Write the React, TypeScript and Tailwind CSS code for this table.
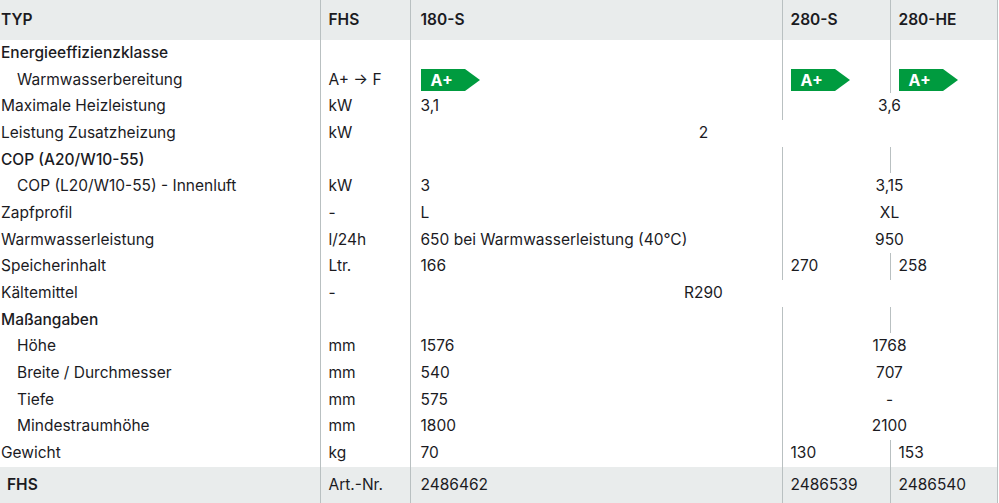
import React from "react";

type Cell = { text?: React.ReactNode; span?: number; label?: boolean };
type Row = { name: string; kind?: "section" | "sub"; unit?: string; cells: Cell[] };

const rows: Row[] = [
  { name: "Energieeffizienzklasse", kind: "section", cells: [{}, {}, {}] },
  { name: "Warmwasserbereitung", kind: "sub", unit: "A+ → F", cells: [{ label: true }, { label: true }, { label: true }] },
  { name: "Maximale Heizleistung", unit: "kW", cells: [{ text: "3,1" }, { text: "3,6", span: 2 }] },
  { name: "Leistung Zusatzheizung", unit: "kW", cells: [{ text: "2", span: 3 }] },
  { name: "COP (A20/W10-55)", kind: "section", cells: [{}, {}, {}] },
  { name: "COP (L20/W10-55) - Innenluft", kind: "sub", unit: "kW", cells: [{ text: "3" }, { text: "3,15", span: 2 }] },
  { name: "Zapfprofil", unit: "-", cells: [{ text: "L" }, { text: "XL", span: 2 }] },
  { name: "Warmwasserleistung", unit: "l/24h", cells: [{ text: "650 bei Warmwasserleistung (40°C)" }, { text: "950", span: 2 }] },
  { name: "Speicherinhalt", unit: "Ltr.", cells: [{ text: "166" }, { text: "270" }, { text: "258" }] },
  { name: "Kältemittel", unit: "-", cells: [{ text: "R290", span: 3 }] },
  { name: "Maßangaben", kind: "section", cells: [{}, {}, {}] },
  { name: "Höhe", kind: "sub", unit: "mm", cells: [{ text: "1576" }, { text: "1768", span: 2 }] },
  { name: "Breite / Durchmesser", kind: "sub", unit: "mm", cells: [{ text: "540" }, { text: "707", span: 2 }] },
  { name: "Tiefe", kind: "sub", unit: "mm", cells: [{ text: "575" }, { text: "-", span: 2 }] },
  { name: "Mindestraumhöhe", kind: "sub", unit: "mm", cells: [{ text: "1800" }, { text: "2100", span: 2 }] },
  { name: "Gewicht", unit: "kg", cells: [{ text: "70" }, { text: "130" }, { text: "153" }] },
];

function EnergyLabel() {
  return (
    <span className="relative inline-flex h-[22px] w-[59px] items-center align-middle">
      <svg className="absolute inset-0" width="59" height="22" viewBox="0 0 59 22">
        <polygon points="0,0 44,0 59,11 44,22 0,22" fill="#009b3f" />
      </svg>
      <span className="relative pl-[10px] text-[16px] font-bold leading-none text-white">A+</span>
    </span>
  );
}

const line = "border-l border-[#b9c0c1]";

export default function App() {
  return (
    <div className="w-[999px] h-[503px] overflow-hidden bg-white text-[15.5px] text-[#1b1b1f]" style={{ fontFamily: "Inter, 'Noto Sans', sans-serif" }}>
      <table className="w-[997px] table-fixed border-collapse">
        <colgroup>
          <col className="w-[320px]" />
          <col className="w-[90px]" />
          <col className="w-[372px]" />
          <col className="w-[108px]" />
          <col className="w-[107px]" />
        </colgroup>
        <thead>
          <tr className="h-[40px] bg-[#e9ecec]">
            <th className="pl-px text-left font-semibold">TYP</th>
            <th className={`${line} pl-2 text-left font-semibold`}>FHS</th>
            <th className={`${line} pl-[10px] text-left font-semibold`}>180-S</th>
            <th className={`${line} pl-2 text-left font-semibold`}>280-S</th>
            <th className={`${line} border-r pl-2 text-left font-semibold`}>280-HE</th>
          </tr>
        </thead>
        <tbody>
          {rows.map((r) => {
            let col = 2;
            return (
              <tr key={r.name} className="h-[26.65px] leading-[26.65px]">
                <td className={`${r.kind === "sub" ? "pl-[17px]" : "pl-px"} ${r.kind === "section" ? "font-medium" : ""} whitespace-nowrap`}>
                  {r.name}
                </td>
                <td className={`${line} pl-2 whitespace-nowrap`}>{r.unit}</td>
                {r.cells.map((c, i) => {
                  const span = c.span ?? 1;
                  const start = col;
                  col += span;
                  const last = col === 5;
                  const pad = start === 2 ? "pl-[10px]" : "pl-2";
                  return (
                    <td
                      key={i}
                      colSpan={span}
                      className={`${line} ${last ? "border-r" : ""} ${span > 1 ? "text-center" : `${pad} text-left`} whitespace-nowrap`}
                    >
                      {c.label ? <EnergyLabel /> : c.text}
                    </td>
                  );
                })}
              </tr>
            );
          })}
          <tr className="h-[37px] bg-[#e9ecec]">
            <td className="pl-[7px] font-semibold">FHS</td>
            <td className={`${line} pl-2`}>Art.-Nr.</td>
            <td className={`${line} pl-[10px]`}>2486462</td>
            <td className={`${line} pl-2`}>2486539</td>
            <td className={`${line} border-r pl-2`}>2486540</td>
          </tr>
        </tbody>
      </table>
    </div>
  );
}
